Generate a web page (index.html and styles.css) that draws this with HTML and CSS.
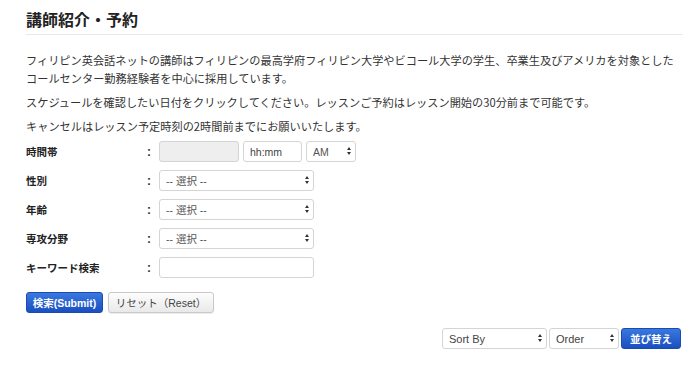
FILE: index.html
```html
<!DOCTYPE html>
<html lang="ja">
<head>
  <meta charset="UTF-8" />
  <meta name="viewport" content="width=device-width, initial-scale=1.0"/>
  <title>講師紹介・予約</title>
  <link rel="stylesheet" href="styles.css">
</head>
<body>

  <div class="page">
    <h2 class="title">講師紹介・予約</h2>

    <p>フィリピン英会話ネットの講師はフィリピンの最高学府フィリピン大学やビコール大学の学生、卒業生及びアメリカを対象とした<br>コールセンター勤務経験者を中心に採用しています。</p>
    <p>スケジュールを確認したい日付をクリックしてください。レッスンご予約はレッスン開始の30分前まで可能です。</p>
    <p>キャンセルはレッスン予定時刻の2時間前までにお願いいたします。</p>

    <form class="search" onsubmit="return false;">
      <div class="row">
        <label>時間帯</label>
        <span class="colon">:</span>
        <div class="field">
          <input type="text" class="date" disabled>
          <input type="text" class="time" placeholder="hh:mm">
          <span class="sel ampm">
            <select><option>AM</option><option>PM</option></select>
          </span>
        </div>
      </div>

      <div class="row">
        <label>性別</label>
        <span class="colon">:</span>
        <div class="field">
          <span class="sel wide"><select><option>-- 選択 --</option></select></span>
        </div>
      </div>

      <div class="row">
        <label>年齢</label>
        <span class="colon">:</span>
        <div class="field">
          <span class="sel wide"><select><option>-- 選択 --</option></select></span>
        </div>
      </div>

      <div class="row">
        <label>専攻分野</label>
        <span class="colon">:</span>
        <div class="field">
          <span class="sel wide"><select><option>-- 選択 --</option></select></span>
        </div>
      </div>

      <div class="row">
        <label>キーワード検索</label>
        <span class="colon">:</span>
        <div class="field">
          <input type="text" class="keyword">
        </div>
      </div>

      <div class="actions">
        <button type="submit" class="btn-blue">検索(Submit)</button>
        <button type="reset" class="btn-gray">リセット（Reset）</button>
      </div>
    </form>

    <div class="sortbar">
      <span class="sel sortby"><select><option>Sort By</option></select></span>
      <span class="sel order"><select><option>Order</option></select></span>
      <button class="btn-blue sort-btn">並び替え</button>
    </div>
  </div>

</body>
</html>
```

FILE: styles.css
```css
body {
  margin: 0;
  background: #fff;
  color: #333;
  font-family: "Noto Sans CJK JP", "Liberation Sans", sans-serif;
}

.page {
  width: 657px;
  padding: 0 17px 0 26px;
}

.title {
  margin: 7px 0 0;
  padding-bottom: 3px;
  font-size: 16px;
  line-height: 24px;
  font-weight: bold;
  color: #222;
  border-bottom: 1px solid #e8e8e8;
}

p {
  margin: 6px 0 0;
  font-size: 11.2px;
  line-height: 18px;
}

.title + p {
  margin-top: 16px;
}

.search {
  margin-top: 6px;
}

.row {
  display: grid;
  grid-template-columns: 118px 15px auto;
  align-items: center;
  height: 21px;
  margin-bottom: 8px;
}

.row label {
  font-size: 10.5px;
  font-weight: bold;
  color: #222;
}

.colon {
  font-family: "Liberation Sans", sans-serif;
  font-size: 12px;
  font-weight: bold;
  padding-left: 3px;
}

.field {
  display: flex;
  gap: 4px;
  height: 21px;
}

input,
select {
  box-sizing: border-box;
  display: block;
  height: 21px;
  margin: 0;
  border: 1px solid #d4d4d4;
  border-radius: 3px;
  background: #fff;
  font-family: "Liberation Sans", "Noto Sans CJK JP", sans-serif;
  font-size: 10.5px;
  color: #555;
  padding: 0 6px;
}

input::placeholder {
  color: #444;
}

.date {
  width: 80px;
  background: #eee;
}

.time {
  width: 59px;
}

.keyword {
  width: 155px;
}

select {
  appearance: none;
  -webkit-appearance: none;
  width: 100%;
  padding-right: 14px;
}

.sel {
  position: relative;
  display: block;
  height: 21px;
}

.sel::before,
.sel::after {
  content: "";
  position: absolute;
  right: 5px;
  width: 0;
  height: 0;
  border-left: 2.5px solid transparent;
  border-right: 2.5px solid transparent;
  pointer-events: none;
}

.sel::before {
  top: 6px;
  border-bottom: 3.5px solid #333;
}

.sel::after {
  top: 11px;
  border-top: 3.5px solid #333;
}

.ampm { width: 50px; }
.wide { width: 155px; }
.sortby { width: 105px; }
.order { width: 70px; }

.actions {
  display: flex;
  gap: 5px;
  margin-top: 14px;
}

button {
  box-sizing: border-box;
  height: 21px;
  border-radius: 3px;
  font-family: "Liberation Sans", "Noto Sans CJK JP", sans-serif;
  font-size: 10.5px;
  cursor: pointer;
  padding: 0;
}

.btn-blue {
  width: 77px;
  border: 1px solid #1a4bb0;
  background: linear-gradient(#3a78df, #1a4fc0);
  color: #fff;
  font-weight: bold;
}

.btn-gray {
  width: 106px;
  border: 1px solid #c9c9c9;
  background: linear-gradient(#fdfdfd, #e9e9e9);
  color: #444;
  box-shadow: 0 1px 1px rgba(0, 0, 0, 0.08);
}

.sortbar {
  display: flex;
  justify-content: flex-end;
  gap: 2px;
  margin-top: 15px;
  padding-right: 2px;
}

.sortbar select {
  font-size: 11px;
  color: #444;
}

.sort-btn {
  width: 60px;
}
```
